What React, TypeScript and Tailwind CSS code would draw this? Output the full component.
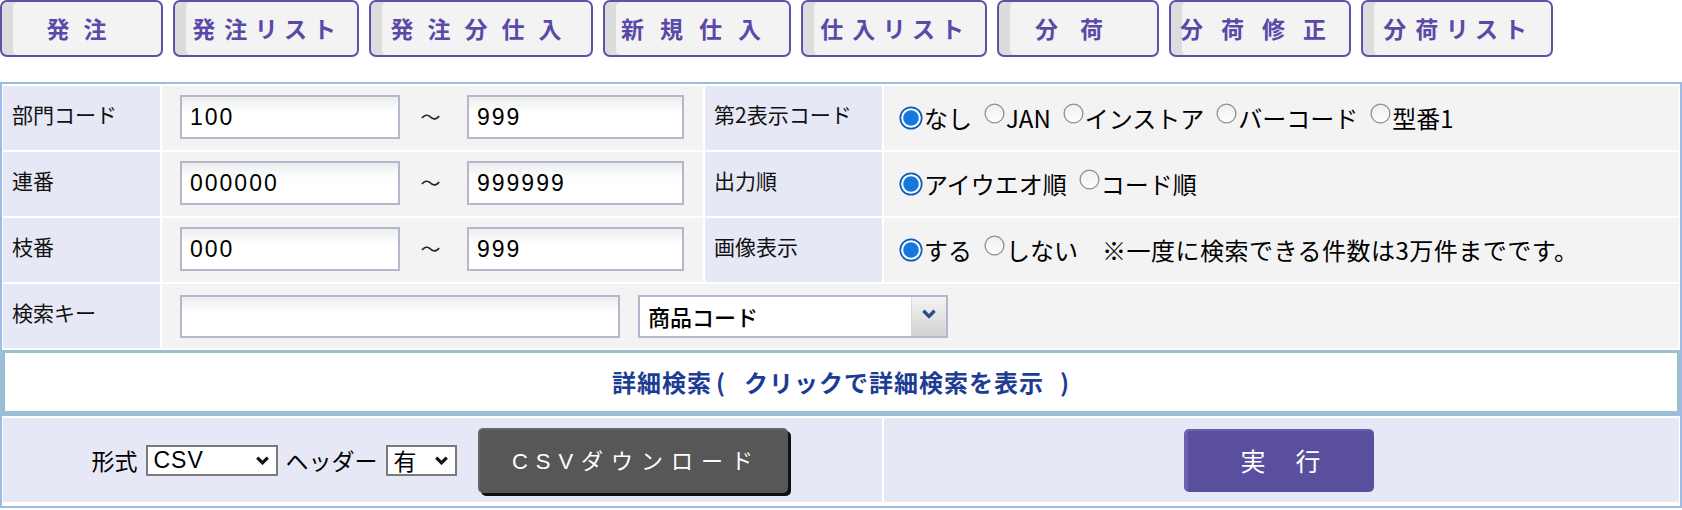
import React from 'react';

const jp = "font-['Noto_Sans_CJK_JP','Noto_Sans',sans-serif]";

const navItems = [
  { label: '発注', cls: 'w-[163px] tracking-[14px]' },
  { label: '発注リスト', cls: 'w-[186px] tracking-[9px]' },
  { label: '発注分仕入', cls: 'w-[224px] tracking-[14px]' },
  { label: '新規仕入', cls: 'w-[188px] tracking-[16px]' },
  { label: '仕入リスト', cls: 'w-[186px] tracking-[9px]' },
  { label: '分荷', cls: 'w-[162px] tracking-[22px]' },
  { label: '分荷修正', cls: 'w-[182px] tracking-[18px]' },
  { label: '分荷リスト', cls: 'w-[192px] tracking-[9px]' },
];

function RadioOn() {
  return (
    <svg width="24" height="24" viewBox="0 0 24 24" className="shrink-0">
      <circle cx="12" cy="12" r="10.7" fill="white" stroke="#0b5cbc" strokeWidth="1.7" />
      <circle cx="12" cy="12" r="7.8" fill="#1677dc" />
    </svg>
  );
}

function RadioOff() {
  return (
    <svg width="21" height="21" viewBox="0 0 21 21" className="shrink-0 -translate-y-[5px]">
      <defs>
        <linearGradient id="roff" x1="0" y1="0" x2="0" y2="1">
          <stop offset="0" stopColor="#eeeeee" />
          <stop offset="1" stopColor="#ffffff" />
        </linearGradient>
      </defs>
      <circle cx="10.5" cy="10.5" r="9.4" fill="url(#roff)" stroke="#8f8f8f" strokeWidth="1.3" />
    </svg>
  );
}

function Radio({ on, label }: { on?: boolean; label: string }) {
  return (
    <span className="flex items-center">
      {on ? <RadioOn /> : <RadioOff />}
      <span className="ml-[1px]">{label}</span>
    </span>
  );
}

function TextBox({ value, w }: { value: string; w: string }) {
  return (
    <div
      className={`${w} h-[44px] border-2 border-[#b4b8ca] bg-gradient-to-b from-[#eceeee] to-white to-40% flex items-center pl-[8px] font-['Liberation_Sans',sans-serif] text-[23px] tracking-[2px] text-black`}
    >
      {value}
    </div>
  );
}

function Label({ children }: { children: React.ReactNode }) {
  return (
    <div className="bg-[#e6e9f5] flex items-center pl-[9px] pb-[6px] text-[21px] text-[#111]">{children}</div>
  );
}

function Chevron({ color, size }: { color: string; size: number }) {
  return (
    <svg width={size} height={size * 0.7} viewBox="0 0 14 10">
      <path d="M2 2.5 L7 7.5 L12 2.5" fill="none" stroke={color} strokeWidth="3" />
    </svg>
  );
}

function SmallSelect({ value, w, mono }: { value: string; w: string; mono?: boolean }) {
  return (
    <div className={`${w} h-[31px] border-2 border-[#7a7a7a] bg-white flex items-center justify-between pl-[6px] pr-[6px]`}>
      <span className={mono ? "font-['Liberation_Sans',sans-serif] text-[23px] tracking-[1px]" : 'text-[23px]'}>{value}</span>
      <Chevron color="#111" size={15} />
    </div>
  );
}

function RangeRow({ label, from, to }: { label: string; from: string; to: string }) {
  return (
    <>
      <Label>{label}</Label>
      <div className="bg-[#f3f3f3] flex items-center pl-[18px] pb-[2px]">
        <TextBox value={from} w="w-[220px]" />
        <span className="w-[67px] text-center pr-[6px] text-[20px] text-[#222]">～</span>
        <TextBox value={to} w="w-[217px]" />
      </div>
    </>
  );
}

export default function App() {
  return (
    <div className={`${jp} w-[1682px] h-[510px] bg-white overflow-hidden text-black`}>
      {/* top menu */}
      <div className="flex gap-[10px] h-[57px]">
        {navItems.map((n) => (
          <button
            key={n.label}
            className={`${n.cls} h-[57px] rounded-[7px] border-2 border-[#5d52a6] bg-[#f3f3f3] shadow-[inset_11px_0_0_#dcdcdc] text-[23px] font-bold text-[#5a4aa8] [font-feature-settings:'palt'] flex items-center justify-center pl-[4px]`}
          >
            {n.label}
          </button>
        ))}
      </div>

      {/* search form */}
      <div className="mt-[25px] border-2 border-[#9dbce4] bg-white">
        <div className="grid grid-cols-[157px_541px_177px_1fr] grid-rows-[64px_64px_64px_64px] gap-[2px] px-[1px] pt-[2px] pb-[2px]">
          <RangeRow label="部門コード" from="100" to="999" />
          <Label>第2表示コード</Label>
          <div className="bg-[#f3f3f3] flex items-center gap-[12px] pl-[15px] text-[24px]">
            <Radio on label="なし" />
            <Radio label="JAN" />
            <Radio label="インストア" />
            <Radio label="バーコード" />
            <Radio label="型番1" />
          </div>

          <RangeRow label="連番" from="000000" to="999999" />
          <Label>出力順</Label>
          <div className="bg-[#f3f3f3] flex items-center gap-[12px] pl-[15px] text-[24px]">
            <Radio on label="アイウエオ順" />
            <Radio label="コード順" />
          </div>

          <RangeRow label="枝番" from="000" to="999" />
          <Label>画像表示</Label>
          <div className="bg-[#f3f3f3] flex items-center gap-[12px] pl-[15px] text-[24px]">
            <Radio on label="する" />
            <Radio label="しない" />
            <span className="ml-[12px] tracking-[0.5px]">※一度に検索できる件数は3万件までです。</span>
          </div>

          <Label>検索キー</Label>
          <div className="col-span-3 bg-[#f3f3f3] flex items-center gap-[18px] pl-[18px]">
            <div className="w-[440px] h-[43px] border-2 border-[#b4b8ca] bg-gradient-to-b from-[#eceeee] to-white to-40%" />
            <div className="w-[310px] h-[43px] border-2 border-[#b4b8ca] bg-white flex items-stretch">
              <span className="flex-1 flex items-center pl-[8px] text-[22px] font-medium text-black">商品コード</span>
              <span className="w-[35px] border-l border-[#d8d8d8] bg-gradient-to-b from-[#f4f4f4] to-[#d2d2d2] flex items-center justify-center pb-[4px]">
                <Chevron color="#2c4a8c" size={16} />
              </span>
            </div>
          </div>
        </div>

        {/* detail search toggle */}
        <div className="h-[64px] border-[3px] border-[#9ac0ce] bg-white flex items-center justify-center text-[24px] font-bold tracking-[1px] text-[#1d3c93] cursor-pointer">
          詳細検索
          <span className="ml-[4px] mr-[18px]">(</span>
          クリックで詳細検索を表示
          <span className="ml-[16px]">)</span>
        </div>

        <div className="h-[2px] bg-[#9dbce4]" />

        {/* output / execute */}
        <div className="grid grid-cols-[879px_1fr] gap-[2px] h-[90px] px-[1px] pt-[2px] pb-[4px]">
          <div className="bg-[#e6e9f5] flex items-center justify-center gap-[8px] text-[23px] pr-[6px]">
            <span>形式</span>
            <SmallSelect value="CSV" w="w-[132px]" mono />
            <span>ヘッダー</span>
            <SmallSelect value="有" w="w-[71px]" />
            <button className="ml-[13px] w-[310px] h-[65px] rounded-[5px] bg-[#575757] border-l-2 border-t-2 border-[#666] shadow-[3px_3px_0_#111] text-white text-[22px] tracking-[8px] pl-[6px] font-['Liberation_Sans','Noto_Sans_CJK_JP',sans-serif]">
              CSVダウンロード
            </button>
          </div>
          <div className="bg-[#e6e9f5] flex items-center justify-center pr-[6px]">
            <button className="w-[190px] h-[63px] rounded-[5px] bg-[#5a4f9f] border-l-4 border-t-2 border-[#6a60ad] text-white text-[25px] flex items-center justify-center gap-[30px]">
              <span>実</span>
              <span>行</span>
            </button>
          </div>
        </div>
      </div>
    </div>
  );
}
